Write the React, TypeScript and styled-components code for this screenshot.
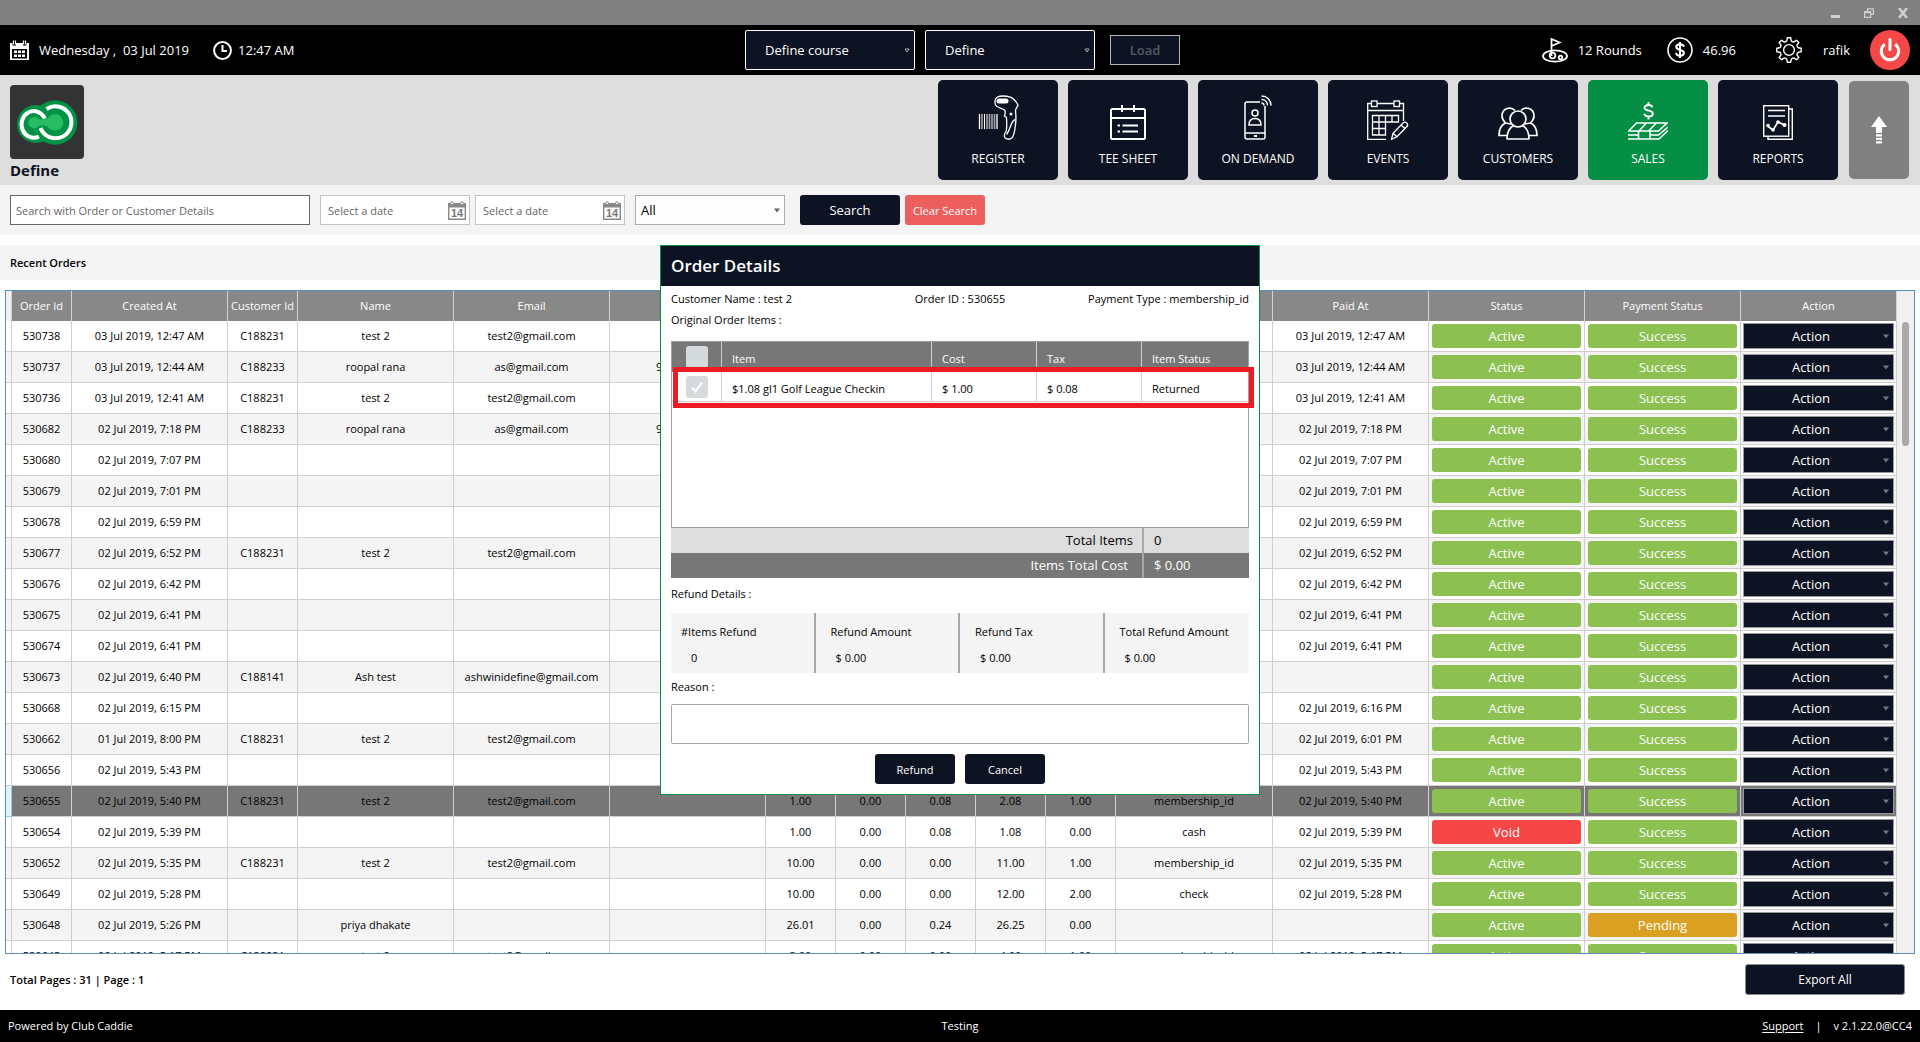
import React from "react";
import styled, { createGlobalStyle, css } from "styled-components";

const navy = "#0d1322";
const green = "#048f45";
const fontStack = '"Open Sans", "Noto Sans", "Segoe UI", sans-serif';

const GlobalStyle = createGlobalStyle`
  * { box-sizing: border-box; }
  body { margin: 0; background: #fff; font-family: ${fontStack}; font-size: 11px; line-height: 16px; color: #000; }
  button, input, select, textarea { font-family: inherit; margin: 0; }
  svg { display: block; flex: none; }
`;

const Page = styled.div`
  display: flex;
  flex-direction: column;
  height: 100vh;
  min-height: 640px;
  overflow: hidden;
`;

/* ---------- window bar ---------- */

const WindowBar = styled.div`
  display: flex;
  justify-content: flex-end;
  align-items: center;
  gap: 24px;
  height: 25px;
  padding-right: 12px;
  background: #808080;
`;

const WindowButton = styled.button`
  padding: 0;
  border: 0;
  background: none;
  color: #d0d0d0;
`;

/* ---------- status bar ---------- */

const TopBar = styled.div`
  display: grid;
  grid-template-columns: 1fr auto 1fr;
  align-items: center;
  height: 50px;
  padding: 0 10px;
  background: #000;
  color: #fff;
  font-size: 13px;
  line-height: 20px;
`;

const TopGroup = styled.div<{ $end?: boolean }>`
  display: flex;
  align-items: center;
  justify-content: ${(p) => (p.$end ? "flex-end" : "flex-start")};
  white-space: pre;
`;

const DateGroup = styled(TopGroup)`
  gap: 10px;
  margin-right: 24px;
`;

const ClockGroup = styled(TopGroup)`
  gap: 6px;
`;

const Stat = styled(TopGroup)<{ $gap: number; $after: number }>`
  gap: ${(p) => p.$gap}px;
  margin-right: ${(p) => p.$after}px;
`;

const CourseForm = styled.div`
  display: flex;
  align-items: center;
  gap: 10px;
  padding-left: 5px;
`;

/* a select and its arrow share one grid cell */
const SelectBox = styled.div`
  display: grid;
  align-items: center;
  > * { grid-area: 1 / 1; }
  > svg { justify-self: end; margin-right: 5px; pointer-events: none; }
`;

const CourseSelect = styled.select`
  appearance: none;
  width: 170px;
  height: 40px;
  padding: 0 19px;
  border: 1px solid #fff;
  border-radius: 2px;
  background: ${navy};
  color: #fff;
  font-size: 13px;
  font-weight: 500;
`;

const LoadButton = styled.button`
  width: 70px;
  height: 30px;
  margin-left: 5px;
  border: 1px solid #b4b4b8;
  background: ${navy};
  color: #555a66;
  font-size: 13px;
  font-weight: 600;
`;

const IconButton = styled.button`
  padding: 0;
  border: 0;
  background: none;
  color: #fff;
`;

const PowerButton = styled.button`
  display: grid;
  place-items: center;
  width: 40px;
  height: 40px;
  padding: 0;
  border: 0;
  border-radius: 50%;
  background: #f44848;
  color: #fff;
`;

/* ---------- header ---------- */

const Header = styled.header`
  display: flex;
  justify-content: space-between;
  align-items: flex-start;
  height: 110px;
  padding: 5px 11px 0 10px;
  background: #ddd;
`;

const Brand = styled.div`
  padding-top: 5px;
`;

const BrandName = styled.h1`
  margin: 0;
  font-size: 15px;
  line-height: 22px;
  font-weight: 700;
  color: ${navy};
`;

const Nav = styled.nav`
  display: flex;
  align-items: center;
  gap: 10px;
`;

const NavButton = styled.button<{ $active?: boolean }>`
  display: flex;
  flex-direction: column;
  align-items: center;
  justify-content: flex-end;
  gap: 9px;
  width: 120px;
  height: 100px;
  padding: 0 0 11px;
  border: 0;
  border-radius: 5px;
  background: ${(p) => (p.$active ? green : navy)};
  color: #fff;
  font-size: 12px;
  line-height: 20px;
  font-weight: 500;
`;

const UpButton = styled.button`
  display: grid;
  place-items: center;
  width: 60px;
  height: 98px;
  margin-left: 1px;
  padding: 0;
  border: 0;
  border-radius: 5px;
  background: #808080;
  color: #fff;
`;

/* ---------- filters ---------- */

const Filters = styled.form`
  display: flex;
  align-items: center;
  height: 50px;
  padding: 0 10px;
  background: #f4f4f4;
`;

const SearchInput = styled.input`
  width: 300px;
  height: 30px;
  margin-right: 10px;
  padding: 0 5px;
  border: 1px solid #666;
  background: #fff;
  font-size: 11px;
  &::placeholder { color: #666; opacity: 1; }
`;

const DateField = styled.div`
  display: flex;
  align-items: center;
  width: 150px;
  height: 30px;
  margin-right: 5px;
  padding: 0 3px 0 7px;
  border: 1px solid #c4c4c4;
  background: #fff;
`;

const DateInput = styled.input`
  flex: 1;
  min-width: 0;
  padding: 0;
  border: 0;
  background: none;
  font-size: 11px;
  &::placeholder { color: #666; opacity: 1; }
`;

const FilterSelect = styled.select`
  appearance: none;
  width: 150px;
  height: 30px;
  padding: 0 5px;
  border: 1px solid #acacac;
  border-radius: 0;
  background: #fdfdfd;
  color: #000;
  font-size: 13px;
`;

const FilterSelectBox = styled(SelectBox)`
  margin: 0 15px 0 5px;
`;

const FilterButton = styled.button<{ $danger?: boolean }>`
  width: ${(p) => (p.$danger ? 80 : 100)}px;
  height: 30px;
  margin-right: 5px;
  padding: 0;
  border: 0;
  border-radius: 3px;
  background: ${(p) => (p.$danger ? "#ed5f5f" : navy)};
  color: #fff;
  font-size: ${(p) => (p.$danger ? 11 : 13)}px;
  font-weight: 500;
`;

const SectionTitle = styled.h2`
  margin: 10px 0 0;
  padding: 0 10px;
  font-size: 11px;
  line-height: 35px;
  font-weight: 600;
  background: #f4f4f4;
`;

/* ---------- orders grid ---------- */

const GridFrame = styled.div`
  flex: 1 1 0;
  min-height: 0;
  display: flex;
  margin: 10px 5px 0;
  border: 1px solid #5f8cb4;
  overflow: hidden;
`;

const GridScroll = styled.div`
  flex: 1;
  min-width: 0;
  overflow: hidden;
`;

const ScrollTrack = styled.div`
  width: 17px;
  padding: 31px 5px 0;
  background: #f0f0f0;
`;

const ScrollThumb = styled.div`
  height: 124px;
  border-radius: 4px;
  background: #a9a9a9;
`;

const OrdersTable = styled.table`
  width: 100%;
  table-layout: fixed;
  border-collapse: separate;
  border-spacing: 0;
  font-size: 11px;
  line-height: 16px;
  text-align: center;
  white-space: nowrap;
`;

const Col = styled.col<{ $w: number }>`
  width: ${(p) => p.$w}px;
`;

const HeadCell = styled.th`
  height: 30px;
  padding: 0;
  border-right: 1px solid #d2d2d2;
  background: #888;
  color: #fff;
  font-weight: 400;
  &:first-child { background: #f0f0f0; }
`;

const Cell = styled.td`
  height: 31px;
  padding: 0;
  border-right: 1px solid #cfcfcf;
  border-bottom: 1px solid #cfcfcf;
`;

const Row = styled.tr<{ $selected: boolean }>`
  background: #fff;
  &:nth-child(even) { background: #f4f4f4; }
  ${(p) =>
    p.$selected &&
    css`
      &&& { background: #777; }
      ${Cell}:first-child { background: #e4f3fb; border-color: #8fd0f5; }
    `}
`;

const tones = { Active: "#8cc152", Success: "#8cc152", Void: "#f64747", Pending: "#daa022" };

const StatusButton = styled.button<{ $tone: keyof typeof tones }>`
  display: block;
  width: calc(100% - 6px);
  height: 24px;
  margin: 0 3px;
  padding: 0;
  border: 0;
  border-radius: 3px;
  background: ${(p) => tones[p.$tone]};
  color: #fff;
  font-size: 13px;
  line-height: 24px;
  font-weight: 500;
`;

const ActionBox = styled(SelectBox)`
  margin: 0 2px;
`;

const ActionSelect = styled.select`
  appearance: none;
  width: 100%;
  height: 26px;
  padding: 0 15px 0 0;
  border: 1px solid #999;
  border-radius: 0;
  background: ${navy};
  color: #fff;
  font-size: 13px;
  font-weight: 500;
  text-align: center;
  text-align-last: center;
`;

/* ---------- footers ---------- */

const PagerBar = styled.div`
  display: flex;
  justify-content: space-between;
  align-items: center;
  height: 56px;
  padding: 0 15px 5px 10px;
  font-weight: 600;
`;

const ExportButton = styled.button`
  width: 160px;
  height: 31px;
  border: 1px solid #8a8a8a;
  border-radius: 3px;
  background: ${navy};
  color: #fff;
  font-size: 12px;
  font-weight: 500;
`;

const Footer = styled.footer`
  display: grid;
  grid-template-columns: 1fr auto 1fr;
  align-items: center;
  height: 32px;
  padding: 0 8px;
  background: #000;
  color: #fff;
`;

const FooterEnd = styled.div`
  display: flex;
  justify-content: flex-end;
  gap: 12px;
  a { color: inherit; text-underline-offset: 2px; }
`;

/* ---------- order dialog ---------- */

const Overlay = styled.div`
  position: fixed;
  inset: 0;
  display: flex;
  justify-content: center;
  align-items: center;
  padding-bottom: 2px;
`;

const Dialog = styled.section`
  width: 600px;
  border: 1px solid ${green};
  background: #fff;
`;

const DialogTitle = styled.h2`
  margin: 0;
  padding: 0 10px;
  font-size: 17px;
  line-height: 40px;
  font-weight: 600;
  background: ${navy};
  color: #fff;
`;

const DialogBody = styled.div`
  padding: 5px 10px 10px;
`;

const OrderFacts = styled.div`
  display: grid;
  grid-template-columns: 1fr auto 1fr;
  line-height: 16px;
  > :last-child { text-align: right; }
`;

const Caption = styled.label`
  display: block;
  padding: 5px 0;
  line-height: 16px;
`;

const ItemsBox = styled.div`
  position: relative;
  height: 187px;
  margin-top: 8px;
  border: 1px solid #a0a0a0;
`;

const ItemsTable = styled.table`
  width: 100%;
  table-layout: fixed;
  border-collapse: separate;
  border-spacing: 0;
  text-align: left;
  th, td { height: 30px; padding: 5px 0 0 10px; font-weight: 400; border-right: 1px solid #cfcfcf; }
  th { padding-top: 3px; background: #777; color: #fff; }
  td { border-bottom: 1px solid #cfcfcf; }
  th:last-child, td:last-child { border-right: 0; }
  th:first-child, td:first-child { padding: 0 0 0 14px; }
`;

const CheckHolder = styled.div`
  display: grid;
  width: 22px;
  height: 22px;
  > * { grid-area: 1 / 1; place-self: center; pointer-events: none; }
`;

const Check = styled.input`
  appearance: none;
  width: 22px;
  height: 22px;
  margin: 0;
  border-radius: 3px;
  background: #d5dadd;
`;

/* red marker drawn over the returned line */
const Highlight = styled.div`
  position: absolute;
  top: 25px;
  left: 1px;
  right: -6px;
  height: 41px;
  border: 5px solid #ed1c24;
  pointer-events: none;
`;

const Totals = styled.div`
  margin-bottom: 3px;
`;

const TotalRow = styled.div<{ $dark?: boolean }>`
  display: grid;
  grid-template-columns: 1fr 107px;
  height: 25px;
  font-size: 13px;
  line-height: 25px;
  background: ${(p) => (p.$dark ? "#777" : "#ddd")};
  color: ${(p) => (p.$dark ? "#fff" : "#000")};
  > :first-child { text-align: right; padding-right: ${(p) => (p.$dark ? 14 : 9)}px; }
  > :last-child { border-left: 2px solid #a8a8a8; padding-left: 10px; }
`;

const RefundBox = styled.div`
  display: grid;
  grid-template-columns: repeat(4, 1fr);
  height: 60px;
  margin: 6px 0 1px;
  background: #f4f4f4;
`;

const RefundCell = styled.div`
  padding: 11px 0 0 15px;
  line-height: 16px;
  border-right: 2px solid #a8a8a8;
  &:first-child { padding-left: 10px; }
  &:last-child { border-right: 0; }
`;

const RefundValue = styled.div<{ $inset: number }>`
  margin-top: 10px;
  padding-left: ${(p) => p.$inset}px;
`;

const Reason = styled.textarea`
  display: block;
  width: 100%;
  height: 40px;
  margin: 4px 0 10px;
  padding: 4px 8px;
  border: 1px solid #a8a8a8;
  border-radius: 2px;
  resize: none;
`;

const DialogActions = styled.div`
  display: flex;
  justify-content: center;
  gap: 10px;
`;

const DialogButton = styled.button`
  width: 80px;
  height: 30px;
  border: 0;
  border-radius: 3px;
  background: ${navy};
  color: #fff;
  font-size: 11px;
  font-weight: 500;
`;

/* ---------- drawings ---------- */

const Arrow = ({ color }: { color: string }) => (
  <svg width="6" height="5" viewBox="0 0 6 5"><path d="M0 0.5h6L3 4.5z" fill={color} /></svg>
);

const HollowArrow = () => (
  <svg width="6" height="5" viewBox="0 0 6 5" fill="none" stroke="#aaa"><path d="M1 1h4L3 4z" /></svg>
);

const CalendarIcon = () => (
  <svg width="19" height="20" viewBox="0 0 19 20">
    <path d="M0 3h2.5v2.5h3.5V3h7v2.5h3.500V3H19v17H0z" fill="#fff" />
    <rect x="2" y="9" width="15" height="9.500" fill="#000" />
    <path d="M3.500 0.500v4M5.500 0.500v4M13.500 0.500v4M15.500 0.500v4" stroke="#fff" strokeWidth="1.200" />
    <path d="M4 10.500h3v2.500H4zM8 10.500h3v2.500H8zM12 10.500h3v2.500h-3zM4 14.500h3V17H4zM8 14.500h3V17H8zM12 14.500h3V17h-3z" fill="#fff" />
  </svg>
);

const ClockIcon = () => (
  <svg width="19" height="19" viewBox="0 0 19 19" fill="none" stroke="#fff" strokeWidth="2">
    <circle cx="9.500" cy="9.500" r="8.400" /><path d="M9.500 4v6H14" />
  </svg>
);

const GolfIcon = () => (
  <svg width="26" height="25" viewBox="0 0 26 25" fill="none" stroke="#fff" strokeWidth="1.800">
    <ellipse cx="13" cy="18" rx="12" ry="5.600" />
    <path d="M9.500 18V1l8 3.500-8 3.500" />
    <circle cx="10.500" cy="17.500" r="2.800" /><circle cx="18.500" cy="19.500" r="1.800" />
  </svg>
);

const DollarIcon = () => (
  <svg width="26" height="26" viewBox="0 0 26 26" fill="none" stroke="#fff">
    <circle cx="13" cy="13" r="12" strokeWidth="1.600" />
    <path d="M16.800 9.800c-.3-1.700-1.900-2.500-3.800-2.500-2.200 0-3.700 1-3.700 2.700 0 3.900 7.600 2 7.600 5.800 0 1.800-1.700 2.900-3.900 2.900s-3.800-1-4-2.800M13 5v16" strokeWidth="2" />
  </svg>
);

const GearIcon = () => {
  const parts: string[] = [];
  for (let i = 0; i < 8; i++) {
    const pt = (deg: number, r: number) => {
      const a = ((i * 45 + deg - 90) * Math.PI) / 180;
      return `${(13 + r * Math.cos(a)).toFixed(1)} ${(13 + r * Math.sin(a)).toFixed(1)}`;
    };
    parts.push(`${i ? "L" : "M"}${pt(-13, 9.6)}L${pt(-8, 12.3)}L${pt(8, 12.3)}L${pt(13, 9.6)}Q${pt(22.5, 8.4)} ${pt(32, 9.6)}`);
  }
  return (
    <svg width="26" height="26" viewBox="0 0 26 26" fill="none" stroke="#fff" strokeWidth="1.400" strokeLinejoin="round">
      <path d={parts.join("") + "Z"} /><circle cx="13" cy="13" r="5.400" />
    </svg>
  );
};

const PowerIcon = () => (
  <svg width="22" height="24" viewBox="0 0 22 24" fill="none" stroke="#fff" strokeWidth="3">
    <path d="M5.800 6.200a8.700 8.700 0 1 0 10.400 0" /><path d="M11 1.500v10" strokeLinecap="round" />
  </svg>
);

const Logo = () => (
  <svg width="74" height="74" viewBox="0 0 74 74">
    <rect width="74" height="74" rx="4" fill="#333" />
    <circle cx="26" cy="39" r="19" fill="#009245" /><circle cx="45" cy="37.500" r="22.300" fill="#009245" />
    <path d="M24 33q10 4 21-3v15q-11-7-21-3z" fill="#28bd62" />
    <circle cx="24" cy="37.500" r="5.600" fill="#28bd62" /><circle cx="45" cy="37.500" r="8.300" fill="#28bd62" />
    <path d="M34.800 33.500A12.300 13.300 0 1 0 29 51.500" fill="none" stroke="#fff" strokeWidth="4" />
    <path d="M36.500 24A16 16 0 1 1 30.500 43" fill="none" stroke="#fff" strokeWidth="4" />
  </svg>
);

const RegisterIcon = () => (
  <svg width="41" height="45" viewBox="0 0 41 45" fill="none" stroke="#fff" strokeWidth="1.300">
    <path d="M1.500 19v15M19 19v15" />
    <path d="M4 19v15M6.500 19v15" strokeWidth="1" />
    <path d="M9 19v15M11.500 19v15M14 19v15M16.500 19v15" strokeWidth="1.600" stroke="#a5a7ad" />
    <path d="M17 6C17 2 21 1 25 1c5 0 9 1.500 11 3.500 2 2 3 3.500 4 5.500-.5 2-2.500 3-2.500 6 .5 4 .7 10-.3 16-.6 5-1.200 8-3 10.500-2 2-5 2-7 .5-1.800-2-1-4 1-7 1-4 .5-9 .3-13.500l-2-1.500c.8-3 1-3 .5-5.500C24 13 19 13 17.500 10c-.4-1.500-.5-2.500-.5-4z" />
    <path d="M37.500 24.500c-3 .5-4 4-5.500 8-1 3-2 5-3.500 7" />
    <rect x="18.500" y="3.500" width="12" height="5" rx="2.500" fill="#fff" stroke="none" />
    <circle cx="33" cy="19" r="1.500" fill="#fff" stroke="none" />
  </svg>
);

const TeeIcon = () => (
  <svg width="36" height="35" viewBox="0 0 36 35" fill="none" stroke="#fff" strokeWidth="2">
    <rect x="1" y="4" width="34" height="30" rx="1.500" />
    <path d="M1 13h34M12 0v7M24 0v7M12.500 20.500H28M12.500 26.500H28M7.500 20.500h2.500M7.500 26.500h2.500" />
  </svg>
);

const DemandIcon = () => (
  <svg width="28" height="45" viewBox="0 0 28 45" fill="none" stroke="#fff" strokeWidth="1.500">
    <path d="M16 7H3Q1 7 1 9v33q0 2 2 2h16q2 0 2-2V11M1 38h20" />
    <circle cx="11" cy="18" r="3" />
    <path d="M5 30c0-4 2-6.500 6-6.500s6 2.500 6 6.500z" />
    <path d="M10 41h3" strokeWidth="2" />
    <path d="M17.500 1C23 1 27 5 27 10.500M17.500 4.500c3.500 0 6 2.500 6 6M17.500 8c1.500 0 2.500 1 2.500 2.500" />
  </svg>
);

const EventsIcon = () => (
  <svg width="42" height="40" viewBox="0 0 42 40" fill="none" stroke="#fff" strokeWidth="1.300">
    <path d="M19 39.300H.7V3.500H4M10 3.500h17M32.500 3.500h4V21M.7 10.500h36" />
    <rect x="4.500" y="1" width="5.500" height="5.500" /><rect x="27" y="1" width="5.500" height="5.500" />
    <path d="M5.500 15.500h26v6.500h-26zM5.500 22v13h13V15.500M5.500 28.500h13M12 15.500V35M25 15.500V22" />
    <path d="M24.500 39.300l1.500-6L36.500 22.500q1.500-1 3 .3t1 3L30 36.800zM26 33.300l4 3.500M34 25l4 3.500" />
  </svg>
);

const CustomersIcon = () => (
  <svg width="40" height="33" viewBox="0 0 40 33" fill="none" stroke="#fff" strokeWidth="1.700">
    <circle cx="20" cy="12" r="8" />
    <path d="M9 32c0-7 2-11 6.500-13.500M31 32c0-7-2-11-6.500-13.500M8.500 32h23" />
    <path d="M17 3.500C13-1 4 1 4 9c0 3 1.500 5 3.500 7C3 18 1 22 1 28.500h8M23 3.500C27-1 36 1 36 9c0 3-1.500 5-3.500 7C37 18 39 22 39 28.500h-8M7.500 16l5.500 1M32.500 16l-5.500 1" />
  </svg>
);

const SalesIcon = () => (
  <svg width="40" height="38" viewBox="0 0 40 38" fill="none" stroke="#fff" strokeWidth="1.600">
    <path d="M24.500 5.300C24 3.800 22.500 3 20.500 3c-2.200 0-4 1-4 2.800 0 4 8.300 1.700 8.300 5.600 0 1.900-1.800 3-4.100 3-2.400 0-4-.9-4.400-2.700M20.500 0v3M20.500 14.500v3" strokeWidth="1.900" />
    <path d="M8.500 21H39l-8.500 8H.8zM18.500 21l-7.500 8M28.500 21l-8 8M0 33h10.500M0 37h31l9-8.500M22 33h8.500l9.500-8M10.500 29v8M22 29v8" />
  </svg>
);

const ReportsIcon = () => (
  <svg width="30" height="35" viewBox="0 0 30 35" fill="none" stroke="#fff" strokeWidth="1.400">
    <rect x=".7" y=".7" width="25" height="30.500" />
    <path d="M26 4h3.300v30.200H5V31M5 5.500h17M5 11h17" />
    <path d="M4.500 21l5.500 4 5-8 6.500 3" strokeWidth="1.700" />
    <g fill="#fff" stroke="none"><circle cx="5" cy="20.500" r="1.800" /><circle cx="10" cy="25" r="1.800" /><circle cx="15" cy="17" r="1.800" /><circle cx="21.500" cy="20" r="2" /></g>
  </svg>
);

const UpIcon = () => (
  <svg width="16" height="28" viewBox="0 0 16 28" fill="#fff">
    <path d="M8 0l8 11h-5v6H5v-6H0zM5 18.300h6v2.200H5zM5 21.800h6V24H5zM5 25.300h6v2.200H5z" />
  </svg>
);

const DateIcon = () => (
  <svg width="18" height="19" viewBox="0 0 18 19">
    <path d="M.7 3h16.600v15.300H.7z" fill="#fff" stroke="#888" strokeWidth="1.400" />
    <path d="M0 2h18v4.500H0z" fill="#888" />
    <circle cx="4" cy="2.300" r="1.500" fill="#fff" stroke="#888" /><circle cx="14" cy="2.300" r="1.500" fill="#fff" stroke="#888" />
    <text x="9" y="16" fontSize="11" fontWeight="700" textAnchor="middle" fill="#777" fontFamily="Liberation Sans, sans-serif">14</text>
  </svg>
);

/* ---------- data ---------- */

type Order = {
  id: string;
  created: string;
  customer?: string;
  name?: string;
  email?: string;
  phone?: string;
  sums?: string[];
  pay?: string;
  paid?: string;
  status?: "Active" | "Void";
  payment?: "Success" | "Pending";
};

const t2 = { customer: "C188231", name: "test 2", email: "test2@gmail.com" };
const roopal = { customer: "C188233", name: "roopal rana", email: "as@gmail.com", phone: "9876543210" };
const at = (time: string, day = "02") => {
  const stamp = `${day} Jul 2019, ${time}`;
  return { created: stamp, paid: stamp };
};

const orders: Order[] = [
  { id: "530738", ...at("12:47 AM", "03"), ...t2 },
  { id: "530737", ...at("12:44 AM", "03"), ...roopal },
  { id: "530736", ...at("12:41 AM", "03"), ...t2 },
  { id: "530682", ...at("7:18 PM"), ...roopal },
  { id: "530680", ...at("7:07 PM") },
  { id: "530679", ...at("7:01 PM") },
  { id: "530678", ...at("6:59 PM") },
  { id: "530677", ...at("6:52 PM"), ...t2 },
  { id: "530676", ...at("6:42 PM") },
  { id: "530675", ...at("6:41 PM") },
  { id: "530674", ...at("6:41 PM") },
  { id: "530673", created: "02 Jul 2019, 6:40 PM", customer: "C188141", name: "Ash test", email: "ashwinidefine@gmail.com" },
  { id: "530668", created: "02 Jul 2019, 6:15 PM", paid: "02 Jul 2019, 6:16 PM" },
  { id: "530662", created: "01 Jul 2019, 8:00 PM", paid: "02 Jul 2019, 6:01 PM", ...t2 },
  { id: "530656", ...at("5:43 PM") },
  { id: "530655", ...at("5:40 PM"), ...t2, sums: ["1.00", "0.00", "0.08", "2.08", "1.00"], pay: "membership_id" },
  { id: "530654", ...at("5:39 PM"), sums: ["1.00", "0.00", "0.08", "1.08", "0.00"], pay: "cash", status: "Void" },
  { id: "530652", ...at("5:35 PM"), ...t2, sums: ["10.00", "0.00", "0.00", "11.00", "1.00"], pay: "membership_id" },
  { id: "530649", ...at("5:28 PM"), sums: ["10.00", "0.00", "0.00", "12.00", "2.00"], pay: "check" },
  { id: "530648", created: "02 Jul 2019, 5:26 PM", name: "priya dhakate", sums: ["26.01", "0.00", "0.24", "26.25", "0.00"], payment: "Pending" },
  { id: "530645", ...at("5:17 PM"), ...t2, sums: ["3.00", "0.00", "0.00", "4.00", "1.00"], pay: "membership_id" },
];

const columns: [string, number][] = [
  ["", 6], ["Order Id", 60], ["Created At", 156], ["Customer Id", 70], ["Name", 156], ["Email", 156], ["", 156],
  ["", 70], ["", 70], ["", 70], ["", 70], ["", 70], ["", 157],
  ["Paid At", 156], ["Status", 156], ["Payment Status", 156], ["Action", 156],
];

const navItems = [
  { label: "REGISTER", Icon: RegisterIcon },
  { label: "TEE SHEET", Icon: TeeIcon },
  { label: "ON DEMAND", Icon: DemandIcon },
  { label: "EVENTS", Icon: EventsIcon },
  { label: "CUSTOMERS", Icon: CustomersIcon },
  { label: "SALES", Icon: SalesIcon, active: true },
  { label: "REPORTS", Icon: ReportsIcon },
];

const OrderRow = ({ order }: { order: Order }) => {
  const sums = order.sums ?? ["", "", "", "", ""];
  const status = order.status ?? "Active";
  const payment = order.payment ?? "Success";
  return (
    <Row $selected={order.id === "530655"}>
      <Cell />
      <Cell>{order.id}</Cell>
      <Cell>{order.created}</Cell>
      <Cell>{order.customer}</Cell>
      <Cell>{order.name}</Cell>
      <Cell>{order.email}</Cell>
      <Cell>{order.phone}</Cell>
      {sums.map((sum, i) => <Cell key={i}>{sum}</Cell>)}
      <Cell>{order.pay}</Cell>
      <Cell>{order.paid}</Cell>
      <Cell><StatusButton type="button" $tone={status}>{status}</StatusButton></Cell>
      <Cell><StatusButton type="button" $tone={payment}>{payment}</StatusButton></Cell>
      <Cell>
        <ActionBox>
          <ActionSelect aria-label={`Action for order ${order.id}`}><option>Action</option></ActionSelect>
          <Arrow color="#777" />
        </ActionBox>
      </Cell>
    </Row>
  );
};

const OrderDialog = () => (
  <Overlay>
    <Dialog role="dialog" aria-labelledby="dialog-title">
      <DialogTitle id="dialog-title">Order Details</DialogTitle>
      <DialogBody>
        <OrderFacts>
          <span>Customer Name : test 2</span>
          <span>Order ID : 530655</span>
          <span>Payment Type : membership_id</span>
        </OrderFacts>
        <Caption as="div">Original Order Items :</Caption>
        <ItemsBox>
          <ItemsTable>
            <colgroup><Col $w={50} /><Col $w={210} /><Col $w={105} /><Col $w={105} /><Col $w={106} /></colgroup>
            <thead>
              <tr>
                <th><CheckHolder><Check type="checkbox" aria-label="Select all items" disabled /></CheckHolder></th>
                <th>Item</th><th>Cost</th><th>Tax</th><th>Item Status</th>
              </tr>
            </thead>
            <tbody>
              <tr>
                <td>
                  <CheckHolder>
                    <Check type="checkbox" aria-label="Select item" defaultChecked disabled />
                    <svg width="12" height="12" viewBox="0 0 12 12" fill="none" stroke="#fff" strokeWidth="2.200"><path d="M1 6.500l3.500 4L11 1.500" /></svg>
                  </CheckHolder>
                </td>
                <td>$1.08 gl1 Golf League Checkin</td><td>$ 1.00</td><td>$ 0.08</td><td>Returned</td>
              </tr>
            </tbody>
          </ItemsTable>
          <Highlight />
        </ItemsBox>
        <Totals>
          <TotalRow><span>Total Items</span><span>0</span></TotalRow>
          <TotalRow $dark><span>Items Total Cost</span><span>$ 0.00</span></TotalRow>
        </Totals>
        <Caption as="div">Refund Details :</Caption>
        <RefundBox>
          <RefundCell>#Items Refund<RefundValue $inset={10}>0</RefundValue></RefundCell>
          <RefundCell>Refund Amount<RefundValue $inset={5}>$ 0.00</RefundValue></RefundCell>
          <RefundCell>Refund Tax<RefundValue $inset={5}>$ 0.00</RefundValue></RefundCell>
          <RefundCell>Total Refund Amount<RefundValue $inset={5}>$ 0.00</RefundValue></RefundCell>
        </RefundBox>
        <Caption htmlFor="reason">Reason :</Caption>
        <Reason id="reason" />
        <DialogActions>
          <DialogButton type="button">Refund</DialogButton>
          <DialogButton type="button">Cancel</DialogButton>
        </DialogActions>
      </DialogBody>
    </Dialog>
  </Overlay>
);

export default function App() {
  return (
    <Page>
      <GlobalStyle />
      <WindowBar>
        <WindowButton aria-label="Minimize">
          <svg width="9" height="10" viewBox="0 0 9 10"><path d="M0 7h9v3H0z" fill="currentColor" /></svg>
        </WindowButton>
        <WindowButton aria-label="Restore">
          <svg width="10" height="10" viewBox="0 0 10 10" fill="none" stroke="currentColor" strokeWidth="1.200"><path d="M.6 3.600h6v5.800h-6zM.6 4.600h6M3.400 3V.8h6v5.600H7" /></svg>
        </WindowButton>
        <WindowButton aria-label="Close">
          <svg width="10" height="10" viewBox="0 0 10 10" fill="none" stroke="currentColor" strokeWidth="2.600"><path d="M1 0l8 10M9 0L1 10" /></svg>
        </WindowButton>
      </WindowBar>

      <TopBar>
        <TopGroup>
          <DateGroup><CalendarIcon /><span>{"Wednesday ,  03 Jul 2019"}</span></DateGroup>
          <ClockGroup><ClockIcon /><span>12:47 AM</span></ClockGroup>
        </TopGroup>
        <CourseForm>
          <SelectBox>
            <CourseSelect aria-label="Course"><option>Define course</option></CourseSelect>
            <HollowArrow />
          </SelectBox>
          <SelectBox>
            <CourseSelect aria-label="Shop"><option>Define</option></CourseSelect>
            <HollowArrow />
          </SelectBox>
          <LoadButton disabled>Load</LoadButton>
        </CourseForm>
        <TopGroup $end>
          <Stat $gap={10} $after={25}><GolfIcon /><span>12 Rounds</span></Stat>
          <Stat $gap={10} $after={40}><DollarIcon /><span>46.96</span></Stat>
          <Stat $gap={21} $after={20}><IconButton aria-label="Settings"><GearIcon /></IconButton><span>rafik</span></Stat>
          <PowerButton aria-label="Log out"><PowerIcon /></PowerButton>
        </TopGroup>
      </TopBar>

      <Header>
        <Brand>
          <Logo />
          <BrandName>Define</BrandName>
        </Brand>
        <Nav>
          {navItems.map(({ label, Icon, active }) => (
            <NavButton key={label} $active={active}><Icon />{label}</NavButton>
          ))}
          <UpButton aria-label="Collapse menu"><UpIcon /></UpButton>
        </Nav>
      </Header>

      <Filters>
        <SearchInput aria-label="Search orders" placeholder="Search with Order or Customer Details" />
        <DateField>
          <DateInput aria-label="From date" placeholder="Select a date" />
          <IconButton type="button" aria-label="Pick from date"><DateIcon /></IconButton>
        </DateField>
        <DateField>
          <DateInput aria-label="To date" placeholder="Select a date" />
          <IconButton type="button" aria-label="Pick to date"><DateIcon /></IconButton>
        </DateField>
        <FilterSelectBox>
          <FilterSelect aria-label="Order status"><option>All</option></FilterSelect>
          <Arrow color="#666" />
        </FilterSelectBox>
        <FilterButton type="button">Search</FilterButton>
        <FilterButton type="button" $danger>Clear Search</FilterButton>
      </Filters>

      <SectionTitle>Recent Orders</SectionTitle>

      <GridFrame>
        <GridScroll>
          <OrdersTable>
            <colgroup>{columns.map(([, w], i) => <Col key={i} $w={w} />)}</colgroup>
            <thead><tr>{columns.map(([title], i) => <HeadCell key={i}>{title}</HeadCell>)}</tr></thead>
            <tbody>{orders.map((order) => <OrderRow key={order.id} order={order} />)}</tbody>
          </OrdersTable>
        </GridScroll>
        <ScrollTrack><ScrollThumb /></ScrollTrack>
      </GridFrame>

      <PagerBar>
        <span>Total Pages : 31 | Page : 1</span>
        <ExportButton>Export All</ExportButton>
      </PagerBar>

      <Footer>
        <span>Powered by Club Caddie</span>
        <span>Testing</span>
        <FooterEnd><a href="#support">Support</a><span>|</span><span>v 2.1.22.0@CC4</span></FooterEnd>
      </Footer>

      <OrderDialog />
    </Page>
  );
}
